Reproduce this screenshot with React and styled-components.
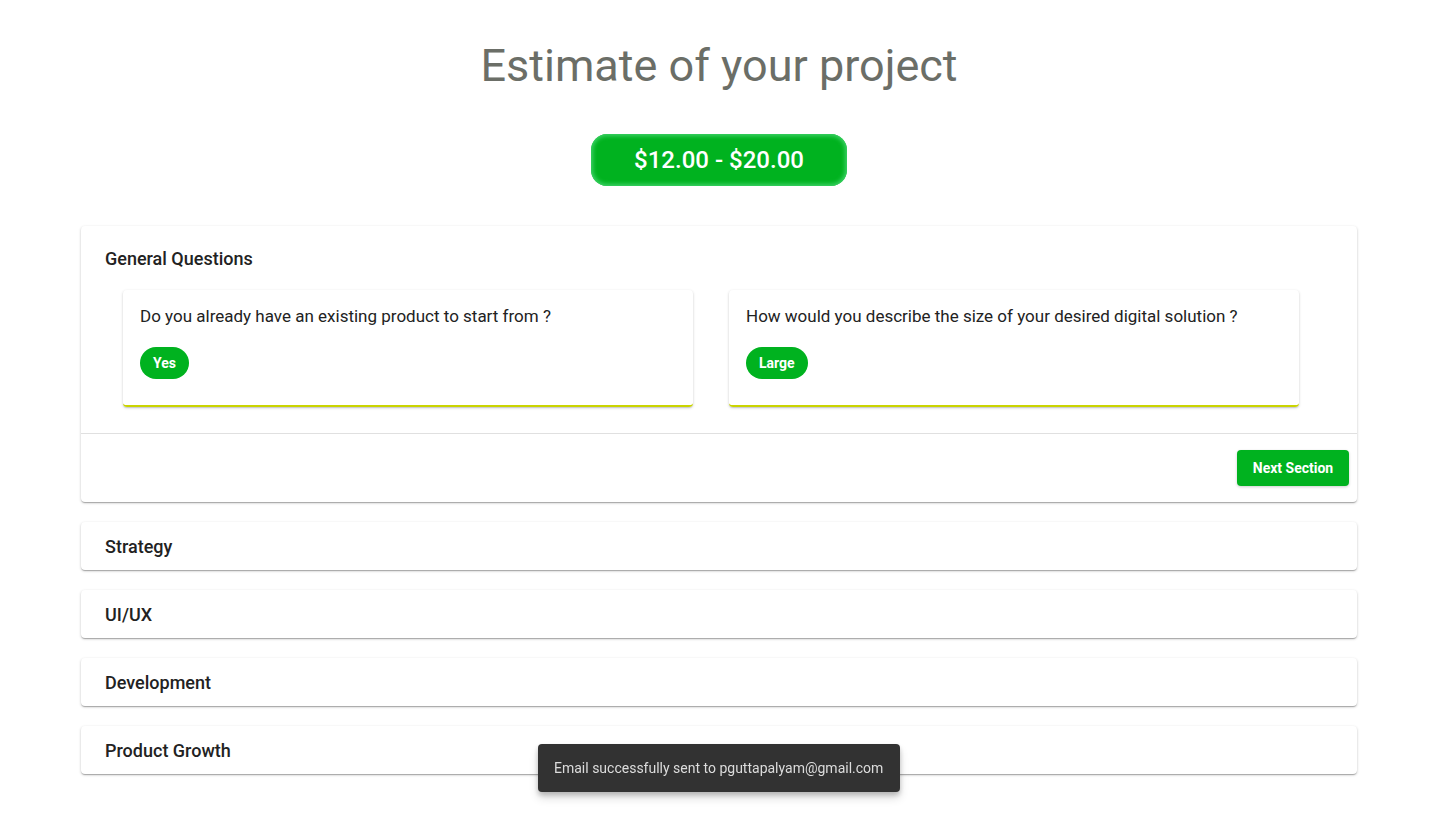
import React from "react";
import styled, { createGlobalStyle } from "styled-components";

const Global = createGlobalStyle`
  body {
    margin: 0;
    background: #fff;
    font-family: Roboto, "Liberation Sans", sans-serif;
  }
`;

const Page = styled.main`
  padding: 0 82px 40px 81px;
  display: flex;
  flex-direction: column;
  align-items: center;
`;

const Title = styled.h1`
  margin: 38px 0 0;
  font-size: 45px;
  line-height: 56px;
  font-weight: 400;
  color: #6b6e67;
`;

const Price = styled.div`
  margin-top: 40px;
  width: 256px;
  height: 52px;
  border-radius: 16px;
  background: #00b21f;
  box-shadow: inset 0 0 4px 2px #3fd36a;
  color: #fff;
  font-size: 24px;
  font-weight: 500;
  display: flex;
  align-items: center;
  justify-content: center;
`;

const Panels = styled.div`
  margin-top: 40px;
  width: 100%;
  display: flex;
  flex-direction: column;
  gap: 20px;
`;

const Panel = styled.section`
  background: #fff;
  border-radius: 4px;
  box-shadow: 0 1px 3px rgba(0, 0, 0, 0.2), 0 1px 1px rgba(0, 0, 0, 0.14), 0 2px 1px -1px rgba(0, 0, 0, 0.12);
`;

const PanelHeader = styled.div`
  height: ${(p) => (p.$open ? "64px" : "48px")};
  padding: 0 24px;
  display: flex;
  align-items: center;
  font-size: 18px;
  font-weight: 500;
  color: #222;
`;

const Cards = styled.div`
  display: grid;
  grid-template-columns: 1fr 1fr;
  gap: 36px;
  padding: 0 58px 26px 42px;
`;

const Card = styled.div`
  height: 117px;
  padding: 16px 17px 0;
  box-sizing: border-box;
  border-radius: 4px;
  border-bottom: 2px solid #cad400;
  box-shadow: 0 1px 3px rgba(0, 0, 0, 0.18), 0 1px 1px rgba(0, 0, 0, 0.1);
`;

const Question = styled.p`
  margin: 0;
  font-size: 17px;
  line-height: 20px;
  color: #222;
`;

const Chip = styled.span`
  display: inline-flex;
  align-items: center;
  margin-top: 21px;
  height: 32px;
  padding: 0 13px;
  border-radius: 16px;
  background: #00b21f;
  color: #fff;
  font-size: 14px;
  font-weight: 700;
`;

const Actions = styled.div`
  border-top: 1px solid #e0e0e0;
  padding: 16px 8px 16px;
  display: flex;
  justify-content: flex-end;
`;

const Button = styled.button`
  height: 36px;
  width: 112px;
  border: none;
  border-radius: 4px;
  background: #00b21f;
  color: #fff;
  font-family: inherit;
  font-size: 14px;
  font-weight: 700;
  box-shadow: 0 1px 3px rgba(0, 0, 0, 0.2);
  cursor: pointer;
`;

const Snackbar = styled.div`
  position: fixed;
  left: 538px;
  top: 744px;
  width: 362px;
  height: 48px;
  box-sizing: border-box;
  padding: 0 16px;
  display: flex;
  align-items: center;
  background: #323232;
  color: #dcdcdc;
  font-size: 14px;
  border-radius: 4px;
  box-shadow: 0 3px 5px rgba(0, 0, 0, 0.2), 0 6px 10px rgba(0, 0, 0, 0.14);
`;

const questions = [
  { q: "Do you already have an existing product to start from ?", a: "Yes" },
  { q: "How would you describe the size of your desired digital solution ?", a: "Large" },
];

const sections = ["Strategy", "UI/UX", "Development", "Product Growth"];

export default function App() {
  return (
    <>
      <Global />
      <Page>
        <Title>Estimate of your project</Title>
        <Price>$12.00 - $20.00</Price>
        <Panels>
          <Panel>
            <PanelHeader $open>General Questions</PanelHeader>
            <Cards>
              {questions.map((item) => (
                <Card key={item.q}>
                  <Question>{item.q}</Question>
                  <Chip>{item.a}</Chip>
                </Card>
              ))}
            </Cards>
            <Actions>
              <Button>Next Section</Button>
            </Actions>
          </Panel>
          {sections.map((s) => (
            <Panel key={s}>
              <PanelHeader>{s}</PanelHeader>
            </Panel>
          ))}
        </Panels>
      </Page>
      <Snackbar>Email successfully sent to pguttapalyam@gmail.com</Snackbar>
    </>
  );
}
